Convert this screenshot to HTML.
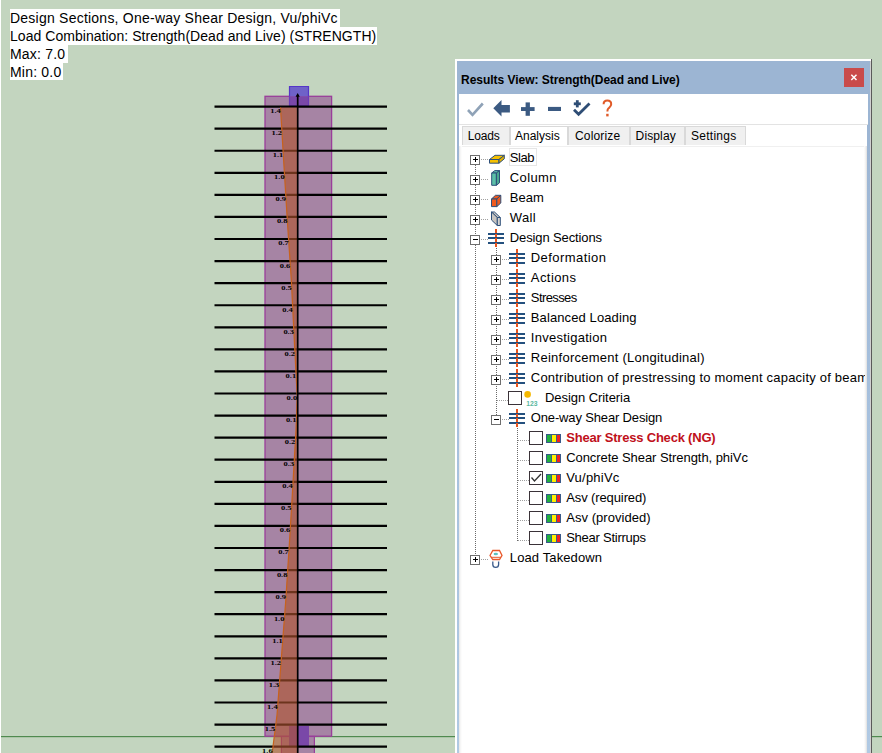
<!DOCTYPE html><html><head><meta charset="utf-8"><style>
html,body{margin:0;padding:0}body{width:882px;height:753px;overflow:hidden;position:relative;background:#c3d5bf;font-family:"Liberation Sans",sans-serif}
.a{position:absolute}.t{position:absolute;white-space:pre;line-height:14px;font-size:13px;color:#000}
.ov{position:absolute;left:10px;height:18px;background:#fff;font-size:14px;line-height:18px;white-space:pre;color:#000}
</style></head><body>
<svg class="a" style="left:0;top:0" width="882" height="753" viewBox="0 0 882 753"><rect x="0" y="0" width="1" height="753" fill="#fff"/><rect x="1" y="736" width="881" height="1.2" fill="#4f8a4f"/><rect x="265" y="96.3" width="66.6" height="639.9" fill="#a684a4" stroke="#9a3e9a" stroke-width="1.3"/><rect x="281.4" y="736.5" width="33" height="30" fill="#a684a4" stroke="#9a3e9a" stroke-width="1.2"/><rect x="289.5" y="86.5" width="19" height="10" fill="#6f62c8"/><rect x="289.5" y="96.5" width="19" height="9.5" fill="#7a48a8"/><path d="M289.5 96.5 L289.5 86.5 L308.5 86.5 L308.5 96.5" fill="none" stroke="#5536c8" stroke-width="1.2"/><path d="M289.5 96.5 L289.5 105.8 L308.5 105.8 L308.5 96.5" fill="none" stroke="#6a3cb8" stroke-width="1.2"/><rect x="289" y="726" width="20" height="20" fill="#7a48a8"/><line x1="214.5" y1="106.60" x2="387" y2="106.60" stroke="#000" stroke-width="2.2"/><line x1="214.5" y1="128.67" x2="387" y2="128.67" stroke="#000" stroke-width="2.2"/><line x1="214.5" y1="150.74" x2="387" y2="150.74" stroke="#000" stroke-width="2.2"/><line x1="214.5" y1="172.81" x2="387" y2="172.81" stroke="#000" stroke-width="2.2"/><line x1="214.5" y1="194.88" x2="387" y2="194.88" stroke="#000" stroke-width="2.2"/><line x1="214.5" y1="216.95" x2="387" y2="216.95" stroke="#000" stroke-width="2.2"/><line x1="214.5" y1="239.02" x2="387" y2="239.02" stroke="#000" stroke-width="2.2"/><line x1="214.5" y1="261.09" x2="387" y2="261.09" stroke="#000" stroke-width="2.2"/><line x1="214.5" y1="283.16" x2="387" y2="283.16" stroke="#000" stroke-width="2.2"/><line x1="214.5" y1="305.23" x2="387" y2="305.23" stroke="#000" stroke-width="2.2"/><line x1="214.5" y1="327.30" x2="387" y2="327.30" stroke="#000" stroke-width="2.2"/><line x1="214.5" y1="349.37" x2="387" y2="349.37" stroke="#000" stroke-width="2.2"/><line x1="214.5" y1="371.44" x2="387" y2="371.44" stroke="#000" stroke-width="2.2"/><line x1="214.5" y1="393.51" x2="387" y2="393.51" stroke="#000" stroke-width="2.2"/><line x1="214.5" y1="415.58" x2="387" y2="415.58" stroke="#000" stroke-width="2.2"/><line x1="214.5" y1="437.65" x2="387" y2="437.65" stroke="#000" stroke-width="2.2"/><line x1="214.5" y1="459.72" x2="387" y2="459.72" stroke="#000" stroke-width="2.2"/><line x1="214.5" y1="481.79" x2="387" y2="481.79" stroke="#000" stroke-width="2.2"/><line x1="214.5" y1="503.86" x2="387" y2="503.86" stroke="#000" stroke-width="2.2"/><line x1="214.5" y1="525.93" x2="387" y2="525.93" stroke="#000" stroke-width="2.2"/><line x1="214.5" y1="548.00" x2="387" y2="548.00" stroke="#000" stroke-width="2.2"/><line x1="214.5" y1="570.07" x2="387" y2="570.07" stroke="#000" stroke-width="2.2"/><line x1="214.5" y1="592.14" x2="387" y2="592.14" stroke="#000" stroke-width="2.2"/><line x1="214.5" y1="614.21" x2="387" y2="614.21" stroke="#000" stroke-width="2.2"/><line x1="214.5" y1="636.28" x2="387" y2="636.28" stroke="#000" stroke-width="2.2"/><line x1="214.5" y1="658.35" x2="387" y2="658.35" stroke="#000" stroke-width="2.2"/><line x1="214.5" y1="680.42" x2="387" y2="680.42" stroke="#000" stroke-width="2.2"/><line x1="214.5" y1="702.49" x2="387" y2="702.49" stroke="#000" stroke-width="2.2"/><line x1="214.5" y1="724.56" x2="387" y2="724.56" stroke="#000" stroke-width="2.2"/><line x1="214.5" y1="746.63" x2="387" y2="746.63" stroke="#000" stroke-width="2.2"/><polygon points="297.7,107.5 280.5,107.5 283.6,160 287.3,220 291.3,280 294.3,340 297.2,396 296,430 292,500 289.6,540 285.8,600 281.2,660 277,715 273.2,745 272.3,753 297.7,753" fill="#b0542e" fill-opacity="0.62"/><polyline points="280.5,107.5 283.6,160 287.3,220 291.3,280 294.3,340 297.2,396 296,430 292,500 289.6,540 285.8,600 281.2,660 277,715 273.2,745 272.3,753" fill="none" stroke="#c8621c" stroke-width="1.2"/><text x="270.2" y="113.0" textLength="10.5" lengthAdjust="spacingAndGlyphs" font-family="Liberation Serif" font-weight="bold" font-size="7" fill="#000">1.4</text><text x="271.5" y="135.1" textLength="10.5" lengthAdjust="spacingAndGlyphs" font-family="Liberation Serif" font-weight="bold" font-size="7" fill="#000">1.2</text><text x="272.8" y="157.1" textLength="10.5" lengthAdjust="spacingAndGlyphs" font-family="Liberation Serif" font-weight="bold" font-size="7" fill="#000">1.1</text><text x="274.1" y="179.2" textLength="10.5" lengthAdjust="spacingAndGlyphs" font-family="Liberation Serif" font-weight="bold" font-size="7" fill="#000">1.0</text><text x="275.5" y="201.3" textLength="10.5" lengthAdjust="spacingAndGlyphs" font-family="Liberation Serif" font-weight="bold" font-size="7" fill="#000">0.9</text><text x="276.9" y="223.3" textLength="10.5" lengthAdjust="spacingAndGlyphs" font-family="Liberation Serif" font-weight="bold" font-size="7" fill="#000">0.8</text><text x="278.3" y="245.4" textLength="10.5" lengthAdjust="spacingAndGlyphs" font-family="Liberation Serif" font-weight="bold" font-size="7" fill="#000">0.7</text><text x="279.8" y="267.5" textLength="10.5" lengthAdjust="spacingAndGlyphs" font-family="Liberation Serif" font-weight="bold" font-size="7" fill="#000">0.6</text><text x="281.2" y="289.6" textLength="10.5" lengthAdjust="spacingAndGlyphs" font-family="Liberation Serif" font-weight="bold" font-size="7" fill="#000">0.5</text><text x="282.3" y="311.6" textLength="10.5" lengthAdjust="spacingAndGlyphs" font-family="Liberation Serif" font-weight="bold" font-size="7" fill="#000">0.4</text><text x="283.4" y="333.7" textLength="10.5" lengthAdjust="spacingAndGlyphs" font-family="Liberation Serif" font-weight="bold" font-size="7" fill="#000">0.3</text><text x="284.5" y="355.8" textLength="10.5" lengthAdjust="spacingAndGlyphs" font-family="Liberation Serif" font-weight="bold" font-size="7" fill="#000">0.2</text><text x="285.6" y="377.8" textLength="10.5" lengthAdjust="spacingAndGlyphs" font-family="Liberation Serif" font-weight="bold" font-size="7" fill="#000">0.1</text><text x="286.6" y="399.9" textLength="10.5" lengthAdjust="spacingAndGlyphs" font-family="Liberation Serif" font-weight="bold" font-size="7" fill="#000">0.0</text><text x="285.9" y="422.0" textLength="10.5" lengthAdjust="spacingAndGlyphs" font-family="Liberation Serif" font-weight="bold" font-size="7" fill="#000">0.1</text><text x="284.8" y="444.0" textLength="10.5" lengthAdjust="spacingAndGlyphs" font-family="Liberation Serif" font-weight="bold" font-size="7" fill="#000">0.2</text><text x="283.6" y="466.1" textLength="10.5" lengthAdjust="spacingAndGlyphs" font-family="Liberation Serif" font-weight="bold" font-size="7" fill="#000">0.3</text><text x="282.3" y="488.2" textLength="10.5" lengthAdjust="spacingAndGlyphs" font-family="Liberation Serif" font-weight="bold" font-size="7" fill="#000">0.4</text><text x="281.0" y="510.3" textLength="10.5" lengthAdjust="spacingAndGlyphs" font-family="Liberation Serif" font-weight="bold" font-size="7" fill="#000">0.5</text><text x="279.7" y="532.3" textLength="10.5" lengthAdjust="spacingAndGlyphs" font-family="Liberation Serif" font-weight="bold" font-size="7" fill="#000">0.6</text><text x="278.3" y="554.4" textLength="10.5" lengthAdjust="spacingAndGlyphs" font-family="Liberation Serif" font-weight="bold" font-size="7" fill="#000">0.7</text><text x="276.9" y="576.5" textLength="10.5" lengthAdjust="spacingAndGlyphs" font-family="Liberation Serif" font-weight="bold" font-size="7" fill="#000">0.8</text><text x="275.5" y="598.5" textLength="10.5" lengthAdjust="spacingAndGlyphs" font-family="Liberation Serif" font-weight="bold" font-size="7" fill="#000">0.9</text><text x="273.9" y="620.6" textLength="10.5" lengthAdjust="spacingAndGlyphs" font-family="Liberation Serif" font-weight="bold" font-size="7" fill="#000">1.0</text><text x="272.2" y="642.7" textLength="10.5" lengthAdjust="spacingAndGlyphs" font-family="Liberation Serif" font-weight="bold" font-size="7" fill="#000">1.1</text><text x="270.5" y="664.8" textLength="10.5" lengthAdjust="spacingAndGlyphs" font-family="Liberation Serif" font-weight="bold" font-size="7" fill="#000">1.2</text><text x="268.8" y="686.8" textLength="10.5" lengthAdjust="spacingAndGlyphs" font-family="Liberation Serif" font-weight="bold" font-size="7" fill="#000">1.3</text><text x="267.1" y="708.9" textLength="10.5" lengthAdjust="spacingAndGlyphs" font-family="Liberation Serif" font-weight="bold" font-size="7" fill="#000">1.4</text><text x="264.8" y="731.0" textLength="10.5" lengthAdjust="spacingAndGlyphs" font-family="Liberation Serif" font-weight="bold" font-size="7" fill="#000">1.5</text><text x="262.1" y="753.0" textLength="10.5" lengthAdjust="spacingAndGlyphs" font-family="Liberation Serif" font-weight="bold" font-size="7" fill="#000">1.6</text><line x1="297.7" y1="95" x2="297.7" y2="753" stroke="#000" stroke-width="1.7"/><polygon points="297.7,93 295.6,96.8 299.8,96.8" fill="#000"/></svg>
<div class="ov" style="top:9px;height:18px;width:330px;letter-spacing:0.23px">Design Sections, One-way Shear Design, Vu/phiVc</div>
<div class="ov" style="top:27px;height:18px;width:367px;letter-spacing:0.04px">Load Combination: Strength(Dead and Live) (STRENGTH)</div>
<div class="ov" style="top:45px;height:17.5px;width:57.5px;letter-spacing:0.2px">Max: 7.0</div>
<div class="ov" style="top:62.5px;height:17.5px;width:53px;letter-spacing:0.2px">Min: 0.0</div>
<div class="a" style="left:455px;top:59px;width:416px;height:694px;background:#fff"></div>
<div class="a" style="left:457px;top:61px;width:413px;height:692px;background:linear-gradient(to bottom,#9cb5d3 0px,#9cb5d3 80px,#a6c0dd 350px,#b0c9e3 692px)"></div>
<div class="a" style="left:870px;top:61px;width:1px;height:692px;background:#d0d0d0"></div>
<div class="a" style="left:871px;top:59px;width:1px;height:694px;background:#5a5a5a"></div>
<div class="a" style="left:459px;top:94px;width:408px;height:659px;background:#fff"></div>
<div class="a" style="left:867px;top:94px;width:1px;height:30px;background:#fff"></div>
<div class="t" style="left:461px;top:73px;font-size:12px;font-weight:bold;letter-spacing:-0.03px">Results View: Strength(Dead and Live)</div>
<div class="a" style="left:844px;top:68px;width:20px;height:19px;background:#c94b4b"></div>
<svg class="a" style="left:844px;top:68px" width="20" height="19"><path d="M7.3 6.8 L12.5 12 M12.5 6.8 L7.3 12" stroke="#fff" stroke-width="1.5"/></svg>
<svg class="a" style="left:459px;top:94px" width="170" height="30" viewBox="459 94 170 30"><polyline points="468,110 472.5,114.8 482.8,103.5" fill="none" stroke="#8fa2b7" stroke-width="2.6" stroke-linejoin="miter"/><polygon points="493.3,108.3 501.5,100.1 501.5,105.1 509.9,105.1 509.9,112.5 501.5,112.5 501.5,116.4" fill="#3b5a82"/><rect x="521" y="107.1" width="13.6" height="3.9" fill="#3b5a82"/><rect x="525.6" y="102.4" width="4.3" height="13.4" fill="#3b5a82"/><rect x="548" y="106.9" width="13" height="4.1" fill="#3b5a82"/><rect x="573.8" y="102.4" width="7" height="2.8" fill="#2e4d75"/><rect x="575.9" y="100.2" width="2.8" height="7.2" fill="#2e4d75"/><polyline points="574,109.8 578.6,114.3 589.5,103.5" fill="none" stroke="#2e4d75" stroke-width="2.8"/></svg>
<svg class="a" style="left:600px;top:98px" width="16" height="22" viewBox="600 98 16 22"><path d="M603.6 104.2 C603.6 101.6 605.4 100.6 607.3 100.6 C609.5 100.6 611.2 102 611.2 104.2 C611.2 106.4 609.6 107.2 608.4 108.4 C607.6 109.2 607.4 110 607.4 111.6" fill="none" stroke="#e05a28" stroke-width="2"/><rect x="606.2" y="113.8" width="2.4" height="2.6" fill="#e05a28"/></svg>
<div class="a" style="left:459px;top:124px;width:409px;height:1px;background:#e3e3e3"></div>
<div class="a" style="left:461.8px;top:126px;width:47.8px;height:18.5px;background:#f0f0f0;box-sizing:border-box;border:1px solid #d9d9d9;border-bottom:none"></div>
<div class="t" style="left:467.7px;top:128.5px;font-size:12px;letter-spacing:-0.18px">Loads</div>
<div class="a" style="left:509.6px;top:126px;width:58.4px;height:18.5px;background:#fff;box-sizing:border-box;border:1px solid #d9d9d9;border-bottom:none"></div>
<div class="t" style="left:515.0px;top:128.5px;font-size:12px;letter-spacing:0.0px">Analysis</div>
<div class="a" style="left:568.0px;top:126px;width:61.6px;height:18.5px;background:#f0f0f0;box-sizing:border-box;border:1px solid #d9d9d9;border-bottom:none"></div>
<div class="t" style="left:575.0px;top:128.5px;font-size:12px;letter-spacing:0.17px">Colorize</div>
<div class="a" style="left:629.6px;top:126px;width:55.0px;height:18.5px;background:#f0f0f0;box-sizing:border-box;border:1px solid #d9d9d9;border-bottom:none"></div>
<div class="t" style="left:635.6px;top:128.5px;font-size:12px;letter-spacing:0.13px">Display</div>
<div class="a" style="left:684.6px;top:126px;width:61.0px;height:18.5px;background:#f0f0f0;box-sizing:border-box;border:1px solid #d9d9d9;border-bottom:none"></div>
<div class="t" style="left:691.0px;top:128.5px;font-size:12px;letter-spacing:0.27px">Settings</div>
<div class="a" style="left:459px;top:146px;width:408px;height:607px;box-sizing:border-box;border-top:1px solid #f0f0f0"></div>
<div class="a" style="left:459px;top:146px;width:3px;height:607px;background:linear-gradient(to right,#e6e6e6,#f6f6f6,#fff)"></div>
<div class="a" style="left:864px;top:146px;width:3px;height:607px;background:linear-gradient(to right,#fff,#f2f2f2,#dedede)"></div>
<svg class="a" style="left:459px;top:146px" width="409" height="430" viewBox="459 146 409 430" shape-rendering="crispEdges"><rect x="475" y="165" width="1" height="1" fill="#6a6a6a"/><rect x="475" y="167" width="1" height="1" fill="#6a6a6a"/><rect x="475" y="169" width="1" height="1" fill="#6a6a6a"/><rect x="475" y="171" width="1" height="1" fill="#6a6a6a"/><rect x="475" y="173" width="1" height="1" fill="#6a6a6a"/><rect x="475" y="175" width="1" height="1" fill="#6a6a6a"/><rect x="475" y="177" width="1" height="1" fill="#6a6a6a"/><rect x="475" y="179" width="1" height="1" fill="#6a6a6a"/><rect x="475" y="181" width="1" height="1" fill="#6a6a6a"/><rect x="475" y="183" width="1" height="1" fill="#6a6a6a"/><rect x="475" y="185" width="1" height="1" fill="#6a6a6a"/><rect x="475" y="187" width="1" height="1" fill="#6a6a6a"/><rect x="475" y="189" width="1" height="1" fill="#6a6a6a"/><rect x="475" y="191" width="1" height="1" fill="#6a6a6a"/><rect x="475" y="193" width="1" height="1" fill="#6a6a6a"/><rect x="475" y="195" width="1" height="1" fill="#6a6a6a"/><rect x="475" y="197" width="1" height="1" fill="#6a6a6a"/><rect x="475" y="199" width="1" height="1" fill="#6a6a6a"/><rect x="475" y="201" width="1" height="1" fill="#6a6a6a"/><rect x="475" y="203" width="1" height="1" fill="#6a6a6a"/><rect x="475" y="205" width="1" height="1" fill="#6a6a6a"/><rect x="475" y="207" width="1" height="1" fill="#6a6a6a"/><rect x="475" y="209" width="1" height="1" fill="#6a6a6a"/><rect x="475" y="211" width="1" height="1" fill="#6a6a6a"/><rect x="475" y="213" width="1" height="1" fill="#6a6a6a"/><rect x="475" y="215" width="1" height="1" fill="#6a6a6a"/><rect x="475" y="217" width="1" height="1" fill="#6a6a6a"/><rect x="475" y="219" width="1" height="1" fill="#6a6a6a"/><rect x="475" y="221" width="1" height="1" fill="#6a6a6a"/><rect x="475" y="223" width="1" height="1" fill="#6a6a6a"/><rect x="475" y="225" width="1" height="1" fill="#6a6a6a"/><rect x="475" y="227" width="1" height="1" fill="#6a6a6a"/><rect x="475" y="229" width="1" height="1" fill="#6a6a6a"/><rect x="475" y="231" width="1" height="1" fill="#6a6a6a"/><rect x="475" y="233" width="1" height="1" fill="#6a6a6a"/><rect x="475" y="235" width="1" height="1" fill="#6a6a6a"/><rect x="475" y="237" width="1" height="1" fill="#6a6a6a"/><rect x="475" y="239" width="1" height="1" fill="#6a6a6a"/><rect x="475" y="241" width="1" height="1" fill="#6a6a6a"/><rect x="475" y="243" width="1" height="1" fill="#6a6a6a"/><rect x="475" y="245" width="1" height="1" fill="#6a6a6a"/><rect x="475" y="247" width="1" height="1" fill="#6a6a6a"/><rect x="475" y="249" width="1" height="1" fill="#6a6a6a"/><rect x="475" y="251" width="1" height="1" fill="#6a6a6a"/><rect x="475" y="253" width="1" height="1" fill="#6a6a6a"/><rect x="475" y="255" width="1" height="1" fill="#6a6a6a"/><rect x="475" y="257" width="1" height="1" fill="#6a6a6a"/><rect x="475" y="259" width="1" height="1" fill="#6a6a6a"/><rect x="475" y="261" width="1" height="1" fill="#6a6a6a"/><rect x="475" y="263" width="1" height="1" fill="#6a6a6a"/><rect x="475" y="265" width="1" height="1" fill="#6a6a6a"/><rect x="475" y="267" width="1" height="1" fill="#6a6a6a"/><rect x="475" y="269" width="1" height="1" fill="#6a6a6a"/><rect x="475" y="271" width="1" height="1" fill="#6a6a6a"/><rect x="475" y="273" width="1" height="1" fill="#6a6a6a"/><rect x="475" y="275" width="1" height="1" fill="#6a6a6a"/><rect x="475" y="277" width="1" height="1" fill="#6a6a6a"/><rect x="475" y="279" width="1" height="1" fill="#6a6a6a"/><rect x="475" y="281" width="1" height="1" fill="#6a6a6a"/><rect x="475" y="283" width="1" height="1" fill="#6a6a6a"/><rect x="475" y="285" width="1" height="1" fill="#6a6a6a"/><rect x="475" y="287" width="1" height="1" fill="#6a6a6a"/><rect x="475" y="289" width="1" height="1" fill="#6a6a6a"/><rect x="475" y="291" width="1" height="1" fill="#6a6a6a"/><rect x="475" y="293" width="1" height="1" fill="#6a6a6a"/><rect x="475" y="295" width="1" height="1" fill="#6a6a6a"/><rect x="475" y="297" width="1" height="1" fill="#6a6a6a"/><rect x="475" y="299" width="1" height="1" fill="#6a6a6a"/><rect x="475" y="301" width="1" height="1" fill="#6a6a6a"/><rect x="475" y="303" width="1" height="1" fill="#6a6a6a"/><rect x="475" y="305" width="1" height="1" fill="#6a6a6a"/><rect x="475" y="307" width="1" height="1" fill="#6a6a6a"/><rect x="475" y="309" width="1" height="1" fill="#6a6a6a"/><rect x="475" y="311" width="1" height="1" fill="#6a6a6a"/><rect x="475" y="313" width="1" height="1" fill="#6a6a6a"/><rect x="475" y="315" width="1" height="1" fill="#6a6a6a"/><rect x="475" y="317" width="1" height="1" fill="#6a6a6a"/><rect x="475" y="319" width="1" height="1" fill="#6a6a6a"/><rect x="475" y="321" width="1" height="1" fill="#6a6a6a"/><rect x="475" y="323" width="1" height="1" fill="#6a6a6a"/><rect x="475" y="325" width="1" height="1" fill="#6a6a6a"/><rect x="475" y="327" width="1" height="1" fill="#6a6a6a"/><rect x="475" y="329" width="1" height="1" fill="#6a6a6a"/><rect x="475" y="331" width="1" height="1" fill="#6a6a6a"/><rect x="475" y="333" width="1" height="1" fill="#6a6a6a"/><rect x="475" y="335" width="1" height="1" fill="#6a6a6a"/><rect x="475" y="337" width="1" height="1" fill="#6a6a6a"/><rect x="475" y="339" width="1" height="1" fill="#6a6a6a"/><rect x="475" y="341" width="1" height="1" fill="#6a6a6a"/><rect x="475" y="343" width="1" height="1" fill="#6a6a6a"/><rect x="475" y="345" width="1" height="1" fill="#6a6a6a"/><rect x="475" y="347" width="1" height="1" fill="#6a6a6a"/><rect x="475" y="349" width="1" height="1" fill="#6a6a6a"/><rect x="475" y="351" width="1" height="1" fill="#6a6a6a"/><rect x="475" y="353" width="1" height="1" fill="#6a6a6a"/><rect x="475" y="355" width="1" height="1" fill="#6a6a6a"/><rect x="475" y="357" width="1" height="1" fill="#6a6a6a"/><rect x="475" y="359" width="1" height="1" fill="#6a6a6a"/><rect x="475" y="361" width="1" height="1" fill="#6a6a6a"/><rect x="475" y="363" width="1" height="1" fill="#6a6a6a"/><rect x="475" y="365" width="1" height="1" fill="#6a6a6a"/><rect x="475" y="367" width="1" height="1" fill="#6a6a6a"/><rect x="475" y="369" width="1" height="1" fill="#6a6a6a"/><rect x="475" y="371" width="1" height="1" fill="#6a6a6a"/><rect x="475" y="373" width="1" height="1" fill="#6a6a6a"/><rect x="475" y="375" width="1" height="1" fill="#6a6a6a"/><rect x="475" y="377" width="1" height="1" fill="#6a6a6a"/><rect x="475" y="379" width="1" height="1" fill="#6a6a6a"/><rect x="475" y="381" width="1" height="1" fill="#6a6a6a"/><rect x="475" y="383" width="1" height="1" fill="#6a6a6a"/><rect x="475" y="385" width="1" height="1" fill="#6a6a6a"/><rect x="475" y="387" width="1" height="1" fill="#6a6a6a"/><rect x="475" y="389" width="1" height="1" fill="#6a6a6a"/><rect x="475" y="391" width="1" height="1" fill="#6a6a6a"/><rect x="475" y="393" width="1" height="1" fill="#6a6a6a"/><rect x="475" y="395" width="1" height="1" fill="#6a6a6a"/><rect x="475" y="397" width="1" height="1" fill="#6a6a6a"/><rect x="475" y="399" width="1" height="1" fill="#6a6a6a"/><rect x="475" y="401" width="1" height="1" fill="#6a6a6a"/><rect x="475" y="403" width="1" height="1" fill="#6a6a6a"/><rect x="475" y="405" width="1" height="1" fill="#6a6a6a"/><rect x="475" y="407" width="1" height="1" fill="#6a6a6a"/><rect x="475" y="409" width="1" height="1" fill="#6a6a6a"/><rect x="475" y="411" width="1" height="1" fill="#6a6a6a"/><rect x="475" y="413" width="1" height="1" fill="#6a6a6a"/><rect x="475" y="415" width="1" height="1" fill="#6a6a6a"/><rect x="475" y="417" width="1" height="1" fill="#6a6a6a"/><rect x="475" y="419" width="1" height="1" fill="#6a6a6a"/><rect x="475" y="421" width="1" height="1" fill="#6a6a6a"/><rect x="475" y="423" width="1" height="1" fill="#6a6a6a"/><rect x="475" y="425" width="1" height="1" fill="#6a6a6a"/><rect x="475" y="427" width="1" height="1" fill="#6a6a6a"/><rect x="475" y="429" width="1" height="1" fill="#6a6a6a"/><rect x="475" y="431" width="1" height="1" fill="#6a6a6a"/><rect x="475" y="433" width="1" height="1" fill="#6a6a6a"/><rect x="475" y="435" width="1" height="1" fill="#6a6a6a"/><rect x="475" y="437" width="1" height="1" fill="#6a6a6a"/><rect x="475" y="439" width="1" height="1" fill="#6a6a6a"/><rect x="475" y="441" width="1" height="1" fill="#6a6a6a"/><rect x="475" y="443" width="1" height="1" fill="#6a6a6a"/><rect x="475" y="445" width="1" height="1" fill="#6a6a6a"/><rect x="475" y="447" width="1" height="1" fill="#6a6a6a"/><rect x="475" y="449" width="1" height="1" fill="#6a6a6a"/><rect x="475" y="451" width="1" height="1" fill="#6a6a6a"/><rect x="475" y="453" width="1" height="1" fill="#6a6a6a"/><rect x="475" y="455" width="1" height="1" fill="#6a6a6a"/><rect x="475" y="457" width="1" height="1" fill="#6a6a6a"/><rect x="475" y="459" width="1" height="1" fill="#6a6a6a"/><rect x="475" y="461" width="1" height="1" fill="#6a6a6a"/><rect x="475" y="463" width="1" height="1" fill="#6a6a6a"/><rect x="475" y="465" width="1" height="1" fill="#6a6a6a"/><rect x="475" y="467" width="1" height="1" fill="#6a6a6a"/><rect x="475" y="469" width="1" height="1" fill="#6a6a6a"/><rect x="475" y="471" width="1" height="1" fill="#6a6a6a"/><rect x="475" y="473" width="1" height="1" fill="#6a6a6a"/><rect x="475" y="475" width="1" height="1" fill="#6a6a6a"/><rect x="475" y="477" width="1" height="1" fill="#6a6a6a"/><rect x="475" y="479" width="1" height="1" fill="#6a6a6a"/><rect x="475" y="481" width="1" height="1" fill="#6a6a6a"/><rect x="475" y="483" width="1" height="1" fill="#6a6a6a"/><rect x="475" y="485" width="1" height="1" fill="#6a6a6a"/><rect x="475" y="487" width="1" height="1" fill="#6a6a6a"/><rect x="475" y="489" width="1" height="1" fill="#6a6a6a"/><rect x="475" y="491" width="1" height="1" fill="#6a6a6a"/><rect x="475" y="493" width="1" height="1" fill="#6a6a6a"/><rect x="475" y="495" width="1" height="1" fill="#6a6a6a"/><rect x="475" y="497" width="1" height="1" fill="#6a6a6a"/><rect x="475" y="499" width="1" height="1" fill="#6a6a6a"/><rect x="475" y="501" width="1" height="1" fill="#6a6a6a"/><rect x="475" y="503" width="1" height="1" fill="#6a6a6a"/><rect x="475" y="505" width="1" height="1" fill="#6a6a6a"/><rect x="475" y="507" width="1" height="1" fill="#6a6a6a"/><rect x="475" y="509" width="1" height="1" fill="#6a6a6a"/><rect x="475" y="511" width="1" height="1" fill="#6a6a6a"/><rect x="475" y="513" width="1" height="1" fill="#6a6a6a"/><rect x="475" y="515" width="1" height="1" fill="#6a6a6a"/><rect x="475" y="517" width="1" height="1" fill="#6a6a6a"/><rect x="475" y="519" width="1" height="1" fill="#6a6a6a"/><rect x="475" y="521" width="1" height="1" fill="#6a6a6a"/><rect x="475" y="523" width="1" height="1" fill="#6a6a6a"/><rect x="475" y="525" width="1" height="1" fill="#6a6a6a"/><rect x="475" y="527" width="1" height="1" fill="#6a6a6a"/><rect x="475" y="529" width="1" height="1" fill="#6a6a6a"/><rect x="475" y="531" width="1" height="1" fill="#6a6a6a"/><rect x="475" y="533" width="1" height="1" fill="#6a6a6a"/><rect x="475" y="535" width="1" height="1" fill="#6a6a6a"/><rect x="475" y="537" width="1" height="1" fill="#6a6a6a"/><rect x="475" y="539" width="1" height="1" fill="#6a6a6a"/><rect x="475" y="541" width="1" height="1" fill="#6a6a6a"/><rect x="475" y="543" width="1" height="1" fill="#6a6a6a"/><rect x="475" y="545" width="1" height="1" fill="#6a6a6a"/><rect x="475" y="547" width="1" height="1" fill="#6a6a6a"/><rect x="475" y="549" width="1" height="1" fill="#6a6a6a"/><rect x="475" y="551" width="1" height="1" fill="#6a6a6a"/><rect x="475" y="553" width="1" height="1" fill="#6a6a6a"/><rect x="496" y="248" width="1" height="1" fill="#6a6a6a"/><rect x="496" y="250" width="1" height="1" fill="#6a6a6a"/><rect x="496" y="252" width="1" height="1" fill="#6a6a6a"/><rect x="496" y="254" width="1" height="1" fill="#6a6a6a"/><rect x="496" y="256" width="1" height="1" fill="#6a6a6a"/><rect x="496" y="258" width="1" height="1" fill="#6a6a6a"/><rect x="496" y="260" width="1" height="1" fill="#6a6a6a"/><rect x="496" y="262" width="1" height="1" fill="#6a6a6a"/><rect x="496" y="264" width="1" height="1" fill="#6a6a6a"/><rect x="496" y="266" width="1" height="1" fill="#6a6a6a"/><rect x="496" y="268" width="1" height="1" fill="#6a6a6a"/><rect x="496" y="270" width="1" height="1" fill="#6a6a6a"/><rect x="496" y="272" width="1" height="1" fill="#6a6a6a"/><rect x="496" y="274" width="1" height="1" fill="#6a6a6a"/><rect x="496" y="276" width="1" height="1" fill="#6a6a6a"/><rect x="496" y="278" width="1" height="1" fill="#6a6a6a"/><rect x="496" y="280" width="1" height="1" fill="#6a6a6a"/><rect x="496" y="282" width="1" height="1" fill="#6a6a6a"/><rect x="496" y="284" width="1" height="1" fill="#6a6a6a"/><rect x="496" y="286" width="1" height="1" fill="#6a6a6a"/><rect x="496" y="288" width="1" height="1" fill="#6a6a6a"/><rect x="496" y="290" width="1" height="1" fill="#6a6a6a"/><rect x="496" y="292" width="1" height="1" fill="#6a6a6a"/><rect x="496" y="294" width="1" height="1" fill="#6a6a6a"/><rect x="496" y="296" width="1" height="1" fill="#6a6a6a"/><rect x="496" y="298" width="1" height="1" fill="#6a6a6a"/><rect x="496" y="300" width="1" height="1" fill="#6a6a6a"/><rect x="496" y="302" width="1" height="1" fill="#6a6a6a"/><rect x="496" y="304" width="1" height="1" fill="#6a6a6a"/><rect x="496" y="306" width="1" height="1" fill="#6a6a6a"/><rect x="496" y="308" width="1" height="1" fill="#6a6a6a"/><rect x="496" y="310" width="1" height="1" fill="#6a6a6a"/><rect x="496" y="312" width="1" height="1" fill="#6a6a6a"/><rect x="496" y="314" width="1" height="1" fill="#6a6a6a"/><rect x="496" y="316" width="1" height="1" fill="#6a6a6a"/><rect x="496" y="318" width="1" height="1" fill="#6a6a6a"/><rect x="496" y="320" width="1" height="1" fill="#6a6a6a"/><rect x="496" y="322" width="1" height="1" fill="#6a6a6a"/><rect x="496" y="324" width="1" height="1" fill="#6a6a6a"/><rect x="496" y="326" width="1" height="1" fill="#6a6a6a"/><rect x="496" y="328" width="1" height="1" fill="#6a6a6a"/><rect x="496" y="330" width="1" height="1" fill="#6a6a6a"/><rect x="496" y="332" width="1" height="1" fill="#6a6a6a"/><rect x="496" y="334" width="1" height="1" fill="#6a6a6a"/><rect x="496" y="336" width="1" height="1" fill="#6a6a6a"/><rect x="496" y="338" width="1" height="1" fill="#6a6a6a"/><rect x="496" y="340" width="1" height="1" fill="#6a6a6a"/><rect x="496" y="342" width="1" height="1" fill="#6a6a6a"/><rect x="496" y="344" width="1" height="1" fill="#6a6a6a"/><rect x="496" y="346" width="1" height="1" fill="#6a6a6a"/><rect x="496" y="348" width="1" height="1" fill="#6a6a6a"/><rect x="496" y="350" width="1" height="1" fill="#6a6a6a"/><rect x="496" y="352" width="1" height="1" fill="#6a6a6a"/><rect x="496" y="354" width="1" height="1" fill="#6a6a6a"/><rect x="496" y="356" width="1" height="1" fill="#6a6a6a"/><rect x="496" y="358" width="1" height="1" fill="#6a6a6a"/><rect x="496" y="360" width="1" height="1" fill="#6a6a6a"/><rect x="496" y="362" width="1" height="1" fill="#6a6a6a"/><rect x="496" y="364" width="1" height="1" fill="#6a6a6a"/><rect x="496" y="366" width="1" height="1" fill="#6a6a6a"/><rect x="496" y="368" width="1" height="1" fill="#6a6a6a"/><rect x="496" y="370" width="1" height="1" fill="#6a6a6a"/><rect x="496" y="372" width="1" height="1" fill="#6a6a6a"/><rect x="496" y="374" width="1" height="1" fill="#6a6a6a"/><rect x="496" y="376" width="1" height="1" fill="#6a6a6a"/><rect x="496" y="378" width="1" height="1" fill="#6a6a6a"/><rect x="496" y="380" width="1" height="1" fill="#6a6a6a"/><rect x="496" y="382" width="1" height="1" fill="#6a6a6a"/><rect x="496" y="384" width="1" height="1" fill="#6a6a6a"/><rect x="496" y="386" width="1" height="1" fill="#6a6a6a"/><rect x="496" y="388" width="1" height="1" fill="#6a6a6a"/><rect x="496" y="390" width="1" height="1" fill="#6a6a6a"/><rect x="496" y="392" width="1" height="1" fill="#6a6a6a"/><rect x="496" y="394" width="1" height="1" fill="#6a6a6a"/><rect x="496" y="396" width="1" height="1" fill="#6a6a6a"/><rect x="496" y="398" width="1" height="1" fill="#6a6a6a"/><rect x="496" y="400" width="1" height="1" fill="#6a6a6a"/><rect x="496" y="402" width="1" height="1" fill="#6a6a6a"/><rect x="496" y="404" width="1" height="1" fill="#6a6a6a"/><rect x="496" y="406" width="1" height="1" fill="#6a6a6a"/><rect x="496" y="408" width="1" height="1" fill="#6a6a6a"/><rect x="496" y="410" width="1" height="1" fill="#6a6a6a"/><rect x="496" y="412" width="1" height="1" fill="#6a6a6a"/><rect x="496" y="414" width="1" height="1" fill="#6a6a6a"/><rect x="517" y="428" width="1" height="1" fill="#6a6a6a"/><rect x="517" y="430" width="1" height="1" fill="#6a6a6a"/><rect x="517" y="432" width="1" height="1" fill="#6a6a6a"/><rect x="517" y="434" width="1" height="1" fill="#6a6a6a"/><rect x="517" y="436" width="1" height="1" fill="#6a6a6a"/><rect x="517" y="438" width="1" height="1" fill="#6a6a6a"/><rect x="517" y="440" width="1" height="1" fill="#6a6a6a"/><rect x="517" y="442" width="1" height="1" fill="#6a6a6a"/><rect x="517" y="444" width="1" height="1" fill="#6a6a6a"/><rect x="517" y="446" width="1" height="1" fill="#6a6a6a"/><rect x="517" y="448" width="1" height="1" fill="#6a6a6a"/><rect x="517" y="450" width="1" height="1" fill="#6a6a6a"/><rect x="517" y="452" width="1" height="1" fill="#6a6a6a"/><rect x="517" y="454" width="1" height="1" fill="#6a6a6a"/><rect x="517" y="456" width="1" height="1" fill="#6a6a6a"/><rect x="517" y="458" width="1" height="1" fill="#6a6a6a"/><rect x="517" y="460" width="1" height="1" fill="#6a6a6a"/><rect x="517" y="462" width="1" height="1" fill="#6a6a6a"/><rect x="517" y="464" width="1" height="1" fill="#6a6a6a"/><rect x="517" y="466" width="1" height="1" fill="#6a6a6a"/><rect x="517" y="468" width="1" height="1" fill="#6a6a6a"/><rect x="517" y="470" width="1" height="1" fill="#6a6a6a"/><rect x="517" y="472" width="1" height="1" fill="#6a6a6a"/><rect x="517" y="474" width="1" height="1" fill="#6a6a6a"/><rect x="517" y="476" width="1" height="1" fill="#6a6a6a"/><rect x="517" y="478" width="1" height="1" fill="#6a6a6a"/><rect x="517" y="480" width="1" height="1" fill="#6a6a6a"/><rect x="517" y="482" width="1" height="1" fill="#6a6a6a"/><rect x="517" y="484" width="1" height="1" fill="#6a6a6a"/><rect x="517" y="486" width="1" height="1" fill="#6a6a6a"/><rect x="517" y="488" width="1" height="1" fill="#6a6a6a"/><rect x="517" y="490" width="1" height="1" fill="#6a6a6a"/><rect x="517" y="492" width="1" height="1" fill="#6a6a6a"/><rect x="517" y="494" width="1" height="1" fill="#6a6a6a"/><rect x="517" y="496" width="1" height="1" fill="#6a6a6a"/><rect x="517" y="498" width="1" height="1" fill="#6a6a6a"/><rect x="517" y="500" width="1" height="1" fill="#6a6a6a"/><rect x="517" y="502" width="1" height="1" fill="#6a6a6a"/><rect x="517" y="504" width="1" height="1" fill="#6a6a6a"/><rect x="517" y="506" width="1" height="1" fill="#6a6a6a"/><rect x="517" y="508" width="1" height="1" fill="#6a6a6a"/><rect x="517" y="510" width="1" height="1" fill="#6a6a6a"/><rect x="517" y="512" width="1" height="1" fill="#6a6a6a"/><rect x="517" y="514" width="1" height="1" fill="#6a6a6a"/><rect x="517" y="516" width="1" height="1" fill="#6a6a6a"/><rect x="517" y="518" width="1" height="1" fill="#6a6a6a"/><rect x="517" y="520" width="1" height="1" fill="#6a6a6a"/><rect x="517" y="522" width="1" height="1" fill="#6a6a6a"/><rect x="517" y="524" width="1" height="1" fill="#6a6a6a"/><rect x="517" y="526" width="1" height="1" fill="#6a6a6a"/><rect x="517" y="528" width="1" height="1" fill="#6a6a6a"/><rect x="517" y="530" width="1" height="1" fill="#6a6a6a"/><rect x="517" y="532" width="1" height="1" fill="#6a6a6a"/><rect x="517" y="534" width="1" height="1" fill="#6a6a6a"/><rect x="517" y="536" width="1" height="1" fill="#6a6a6a"/><rect x="517" y="538" width="1" height="1" fill="#6a6a6a"/><rect x="517" y="540" width="1" height="1" fill="#6a6a6a"/><rect x="470.5" y="155.5" width="9" height="9" fill="#fff" stroke="#6e6e6e" stroke-width="1"/><rect x="473" y="159" width="5" height="1" fill="#000"/><rect x="475" y="157" width="1" height="5" fill="#000"/><rect x="481" y="159" width="1" height="1" fill="#a0a0a0"/><rect x="483" y="159" width="1" height="1" fill="#a0a0a0"/><rect x="485" y="159" width="1" height="1" fill="#a0a0a0"/><rect x="487" y="159" width="1" height="1" fill="#a0a0a0"/><g shape-rendering="auto"><path d="M489.5 159.5 L495 155.3 L504.3 155.3 L499 159.5 Z" fill="#f5c000" stroke="#2d4f7a" stroke-width="1"/><path d="M489.5 159.5 L499 159.5 L499 163.2 L489.5 163.2 Z" fill="#f5c000" stroke="#2d4f7a" stroke-width="1"/><path d="M499 159.5 L504.3 155.3 L504.3 158.8 L499 163.2 Z" fill="#e0b000" stroke="#2d4f7a" stroke-width="1"/></g><rect x="470.5" y="175.5" width="9" height="9" fill="#fff" stroke="#6e6e6e" stroke-width="1"/><rect x="473" y="179" width="5" height="1" fill="#000"/><rect x="475" y="177" width="1" height="5" fill="#000"/><rect x="481" y="179" width="1" height="1" fill="#a0a0a0"/><rect x="483" y="179" width="1" height="1" fill="#a0a0a0"/><rect x="485" y="179" width="1" height="1" fill="#a0a0a0"/><rect x="487" y="179" width="1" height="1" fill="#a0a0a0"/><g shape-rendering="auto"><path d="M491.7 173 L494.8 170.6 L499.5 170.6 L496.4 173 Z" fill="#5cc0a8" stroke="#2d4f7a" stroke-width="1"/><path d="M491.7 173 L496.4 173 L496.4 185.3 L491.7 185.3 Z" fill="#5cc0a8" stroke="#2d4f7a" stroke-width="1"/><path d="M496.4 173 L499.5 170.6 L499.5 182.8 L496.4 185.3 Z" fill="#4aa890" stroke="#2d4f7a" stroke-width="1"/></g><rect x="470.5" y="195.5" width="9" height="9" fill="#fff" stroke="#6e6e6e" stroke-width="1"/><rect x="473" y="199" width="5" height="1" fill="#000"/><rect x="475" y="197" width="1" height="5" fill="#000"/><rect x="481" y="199" width="1" height="1" fill="#a0a0a0"/><rect x="483" y="199" width="1" height="1" fill="#a0a0a0"/><rect x="485" y="199" width="1" height="1" fill="#a0a0a0"/><rect x="487" y="199" width="1" height="1" fill="#a0a0a0"/><g shape-rendering="auto"><path d="M491.5 199 L495.5 195.3 L500.8 195.3 L496.8 199 Z" fill="#f05a1e" stroke="#2d4f7a" stroke-width="1"/><path d="M491.5 199 L496.8 199 L496.8 206.6 L491.5 206.6 Z" fill="#f05a1e" stroke="#2d4f7a" stroke-width="1"/><path d="M496.8 199 L500.8 195.3 L500.8 203 L496.8 206.6 Z" fill="#f05a1e" stroke="#2d4f7a" stroke-width="1"/></g><rect x="470.5" y="215.5" width="9" height="9" fill="#fff" stroke="#6e6e6e" stroke-width="1"/><rect x="473" y="219" width="5" height="1" fill="#000"/><rect x="475" y="217" width="1" height="5" fill="#000"/><rect x="481" y="219" width="1" height="1" fill="#a0a0a0"/><rect x="483" y="219" width="1" height="1" fill="#a0a0a0"/><rect x="485" y="219" width="1" height="1" fill="#a0a0a0"/><rect x="487" y="219" width="1" height="1" fill="#a0a0a0"/><g shape-rendering="auto"><path d="M491.5 212 L494.5 212 L500.3 217.5 L497.3 217.5 Z" fill="#c8c4c0" stroke="#2d4f7a" stroke-width="1"/><path d="M491.5 212 L497.3 217.5 L497.3 225.5 L491.5 220 Z" fill="#c8c4c0" stroke="#2d4f7a" stroke-width="1"/><path d="M497.3 217.5 L500.3 217.5 L500.3 225.5 L497.3 225.5 Z" fill="#d8d4d0" stroke="#2d4f7a" stroke-width="1"/></g><rect x="470.5" y="235.5" width="9" height="9" fill="#fff" stroke="#6e6e6e" stroke-width="1"/><rect x="473" y="239" width="5" height="1" fill="#000"/><rect x="481" y="239" width="1" height="1" fill="#a0a0a0"/><rect x="483" y="239" width="1" height="1" fill="#a0a0a0"/><rect x="485" y="239" width="1" height="1" fill="#a0a0a0"/><rect x="487" y="239" width="1" height="1" fill="#a0a0a0"/><rect x="488" y="233" width="16" height="2" fill="#24507e"/><rect x="488" y="237" width="16" height="2" fill="#24507e"/><rect x="488" y="242" width="16" height="2" fill="#24507e"/><rect x="495" y="229" width="2" height="4" fill="#e8541c"/><rect x="495" y="234" width="2" height="3" fill="#e8541c"/><rect x="495" y="238" width="2" height="4" fill="#e8541c"/><rect x="495" y="243" width="2" height="4" fill="#e8541c"/><rect x="491.5" y="255.5" width="9" height="9" fill="#fff" stroke="#6e6e6e" stroke-width="1"/><rect x="494" y="259" width="5" height="1" fill="#000"/><rect x="496" y="257" width="1" height="5" fill="#000"/><rect x="502" y="259" width="1" height="1" fill="#a0a0a0"/><rect x="504" y="259" width="1" height="1" fill="#a0a0a0"/><rect x="506" y="259" width="1" height="1" fill="#a0a0a0"/><rect x="508" y="259" width="1" height="1" fill="#a0a0a0"/><rect x="509" y="253" width="16" height="2" fill="#24507e"/><rect x="509" y="257" width="16" height="2" fill="#24507e"/><rect x="509" y="262" width="16" height="2" fill="#24507e"/><rect x="516" y="249" width="2" height="4" fill="#e8541c"/><rect x="516" y="254" width="2" height="3" fill="#e8541c"/><rect x="516" y="258" width="2" height="4" fill="#e8541c"/><rect x="516" y="263" width="2" height="4" fill="#e8541c"/><rect x="491.5" y="275.5" width="9" height="9" fill="#fff" stroke="#6e6e6e" stroke-width="1"/><rect x="494" y="279" width="5" height="1" fill="#000"/><rect x="496" y="277" width="1" height="5" fill="#000"/><rect x="502" y="279" width="1" height="1" fill="#a0a0a0"/><rect x="504" y="279" width="1" height="1" fill="#a0a0a0"/><rect x="506" y="279" width="1" height="1" fill="#a0a0a0"/><rect x="508" y="279" width="1" height="1" fill="#a0a0a0"/><rect x="509" y="273" width="16" height="2" fill="#24507e"/><rect x="509" y="277" width="16" height="2" fill="#24507e"/><rect x="509" y="282" width="16" height="2" fill="#24507e"/><rect x="516" y="269" width="2" height="4" fill="#e8541c"/><rect x="516" y="274" width="2" height="3" fill="#e8541c"/><rect x="516" y="278" width="2" height="4" fill="#e8541c"/><rect x="516" y="283" width="2" height="4" fill="#e8541c"/><rect x="491.5" y="295.5" width="9" height="9" fill="#fff" stroke="#6e6e6e" stroke-width="1"/><rect x="494" y="299" width="5" height="1" fill="#000"/><rect x="496" y="297" width="1" height="5" fill="#000"/><rect x="502" y="299" width="1" height="1" fill="#a0a0a0"/><rect x="504" y="299" width="1" height="1" fill="#a0a0a0"/><rect x="506" y="299" width="1" height="1" fill="#a0a0a0"/><rect x="508" y="299" width="1" height="1" fill="#a0a0a0"/><rect x="509" y="293" width="16" height="2" fill="#24507e"/><rect x="509" y="297" width="16" height="2" fill="#24507e"/><rect x="509" y="302" width="16" height="2" fill="#24507e"/><rect x="516" y="289" width="2" height="4" fill="#e8541c"/><rect x="516" y="294" width="2" height="3" fill="#e8541c"/><rect x="516" y="298" width="2" height="4" fill="#e8541c"/><rect x="516" y="303" width="2" height="4" fill="#e8541c"/><rect x="491.5" y="315.5" width="9" height="9" fill="#fff" stroke="#6e6e6e" stroke-width="1"/><rect x="494" y="319" width="5" height="1" fill="#000"/><rect x="496" y="317" width="1" height="5" fill="#000"/><rect x="502" y="319" width="1" height="1" fill="#a0a0a0"/><rect x="504" y="319" width="1" height="1" fill="#a0a0a0"/><rect x="506" y="319" width="1" height="1" fill="#a0a0a0"/><rect x="508" y="319" width="1" height="1" fill="#a0a0a0"/><rect x="509" y="313" width="16" height="2" fill="#24507e"/><rect x="509" y="317" width="16" height="2" fill="#24507e"/><rect x="509" y="322" width="16" height="2" fill="#24507e"/><rect x="516" y="309" width="2" height="4" fill="#e8541c"/><rect x="516" y="314" width="2" height="3" fill="#e8541c"/><rect x="516" y="318" width="2" height="4" fill="#e8541c"/><rect x="516" y="323" width="2" height="4" fill="#e8541c"/><rect x="491.5" y="335.5" width="9" height="9" fill="#fff" stroke="#6e6e6e" stroke-width="1"/><rect x="494" y="339" width="5" height="1" fill="#000"/><rect x="496" y="337" width="1" height="5" fill="#000"/><rect x="502" y="339" width="1" height="1" fill="#a0a0a0"/><rect x="504" y="339" width="1" height="1" fill="#a0a0a0"/><rect x="506" y="339" width="1" height="1" fill="#a0a0a0"/><rect x="508" y="339" width="1" height="1" fill="#a0a0a0"/><rect x="509" y="333" width="16" height="2" fill="#24507e"/><rect x="509" y="337" width="16" height="2" fill="#24507e"/><rect x="509" y="342" width="16" height="2" fill="#24507e"/><rect x="516" y="329" width="2" height="4" fill="#e8541c"/><rect x="516" y="334" width="2" height="3" fill="#e8541c"/><rect x="516" y="338" width="2" height="4" fill="#e8541c"/><rect x="516" y="343" width="2" height="4" fill="#e8541c"/><rect x="491.5" y="355.5" width="9" height="9" fill="#fff" stroke="#6e6e6e" stroke-width="1"/><rect x="494" y="359" width="5" height="1" fill="#000"/><rect x="496" y="357" width="1" height="5" fill="#000"/><rect x="502" y="359" width="1" height="1" fill="#a0a0a0"/><rect x="504" y="359" width="1" height="1" fill="#a0a0a0"/><rect x="506" y="359" width="1" height="1" fill="#a0a0a0"/><rect x="508" y="359" width="1" height="1" fill="#a0a0a0"/><rect x="509" y="353" width="16" height="2" fill="#24507e"/><rect x="509" y="357" width="16" height="2" fill="#24507e"/><rect x="509" y="362" width="16" height="2" fill="#24507e"/><rect x="516" y="349" width="2" height="4" fill="#e8541c"/><rect x="516" y="354" width="2" height="3" fill="#e8541c"/><rect x="516" y="358" width="2" height="4" fill="#e8541c"/><rect x="516" y="363" width="2" height="4" fill="#e8541c"/><rect x="491.5" y="375.5" width="9" height="9" fill="#fff" stroke="#6e6e6e" stroke-width="1"/><rect x="494" y="379" width="5" height="1" fill="#000"/><rect x="496" y="377" width="1" height="5" fill="#000"/><rect x="502" y="379" width="1" height="1" fill="#a0a0a0"/><rect x="504" y="379" width="1" height="1" fill="#a0a0a0"/><rect x="506" y="379" width="1" height="1" fill="#a0a0a0"/><rect x="508" y="379" width="1" height="1" fill="#a0a0a0"/><rect x="509" y="373" width="16" height="2" fill="#24507e"/><rect x="509" y="377" width="16" height="2" fill="#24507e"/><rect x="509" y="382" width="16" height="2" fill="#24507e"/><rect x="516" y="369" width="2" height="4" fill="#e8541c"/><rect x="516" y="374" width="2" height="3" fill="#e8541c"/><rect x="516" y="378" width="2" height="4" fill="#e8541c"/><rect x="516" y="383" width="2" height="4" fill="#e8541c"/><rect x="497" y="400" width="1" height="1" fill="#a0a0a0"/><rect x="499" y="400" width="1" height="1" fill="#a0a0a0"/><rect x="501" y="400" width="1" height="1" fill="#a0a0a0"/><rect x="503" y="400" width="1" height="1" fill="#a0a0a0"/><rect x="505" y="400" width="1" height="1" fill="#a0a0a0"/><rect x="507" y="400" width="1" height="1" fill="#a0a0a0"/><rect x="508.5" y="391.5" width="13" height="13" fill="#fff" stroke="#3a3238" stroke-width="1"/><circle cx="527.6" cy="394.4" r="3.3" fill="#f5b800" shape-rendering="auto"/><text x="526.3" y="406" font-family="Liberation Sans" font-size="6.8" font-weight="bold" fill="#5bb8a0" shape-rendering="auto">123</text><rect x="491.5" y="415.5" width="9" height="9" fill="#fff" stroke="#6e6e6e" stroke-width="1"/><rect x="494" y="419" width="5" height="1" fill="#000"/><rect x="502" y="419" width="1" height="1" fill="#a0a0a0"/><rect x="504" y="419" width="1" height="1" fill="#a0a0a0"/><rect x="506" y="419" width="1" height="1" fill="#a0a0a0"/><rect x="508" y="419" width="1" height="1" fill="#a0a0a0"/><rect x="509" y="413" width="16" height="2" fill="#24507e"/><rect x="509" y="417" width="16" height="2" fill="#24507e"/><rect x="509" y="422" width="16" height="2" fill="#24507e"/><rect x="516" y="409" width="2" height="4" fill="#e8541c"/><rect x="516" y="414" width="2" height="3" fill="#e8541c"/><rect x="516" y="418" width="2" height="4" fill="#e8541c"/><rect x="516" y="423" width="2" height="4" fill="#e8541c"/><rect x="518" y="440" width="1" height="1" fill="#a0a0a0"/><rect x="520" y="440" width="1" height="1" fill="#a0a0a0"/><rect x="522" y="440" width="1" height="1" fill="#a0a0a0"/><rect x="524" y="440" width="1" height="1" fill="#a0a0a0"/><rect x="526" y="440" width="1" height="1" fill="#a0a0a0"/><rect x="528" y="440" width="1" height="1" fill="#a0a0a0"/><rect x="529.5" y="431.5" width="13" height="13" fill="#fff" stroke="#3a3238" stroke-width="1"/><rect x="546" y="434" width="15" height="9" fill="#3a5a8a"/><rect x="547" y="435" width="4" height="7" fill="#20b040"/><rect x="551.5" y="435" width="4.5" height="7" fill="#fff000"/><rect x="556.5" y="435" width="3.5" height="7" fill="#f02020"/><rect x="518" y="460" width="1" height="1" fill="#a0a0a0"/><rect x="520" y="460" width="1" height="1" fill="#a0a0a0"/><rect x="522" y="460" width="1" height="1" fill="#a0a0a0"/><rect x="524" y="460" width="1" height="1" fill="#a0a0a0"/><rect x="526" y="460" width="1" height="1" fill="#a0a0a0"/><rect x="528" y="460" width="1" height="1" fill="#a0a0a0"/><rect x="529.5" y="451.5" width="13" height="13" fill="#fff" stroke="#3a3238" stroke-width="1"/><rect x="546" y="454" width="15" height="9" fill="#3a5a8a"/><rect x="547" y="455" width="4" height="7" fill="#20b040"/><rect x="551.5" y="455" width="4.5" height="7" fill="#fff000"/><rect x="556.5" y="455" width="3.5" height="7" fill="#f02020"/><rect x="518" y="480" width="1" height="1" fill="#a0a0a0"/><rect x="520" y="480" width="1" height="1" fill="#a0a0a0"/><rect x="522" y="480" width="1" height="1" fill="#a0a0a0"/><rect x="524" y="480" width="1" height="1" fill="#a0a0a0"/><rect x="526" y="480" width="1" height="1" fill="#a0a0a0"/><rect x="528" y="480" width="1" height="1" fill="#a0a0a0"/><rect x="529.5" y="471.5" width="13" height="13" fill="#fff" stroke="#3a3238" stroke-width="1"/><polyline points="531.5,477.5 534.5,481 541,474" fill="none" stroke="#333" stroke-width="1.3" shape-rendering="auto"/><rect x="546" y="474" width="15" height="9" fill="#3a5a8a"/><rect x="547" y="475" width="4" height="7" fill="#20b040"/><rect x="551.5" y="475" width="4.5" height="7" fill="#fff000"/><rect x="556.5" y="475" width="3.5" height="7" fill="#f02020"/><rect x="518" y="500" width="1" height="1" fill="#a0a0a0"/><rect x="520" y="500" width="1" height="1" fill="#a0a0a0"/><rect x="522" y="500" width="1" height="1" fill="#a0a0a0"/><rect x="524" y="500" width="1" height="1" fill="#a0a0a0"/><rect x="526" y="500" width="1" height="1" fill="#a0a0a0"/><rect x="528" y="500" width="1" height="1" fill="#a0a0a0"/><rect x="529.5" y="491.5" width="13" height="13" fill="#fff" stroke="#3a3238" stroke-width="1"/><rect x="546" y="494" width="15" height="9" fill="#3a5a8a"/><rect x="547" y="495" width="4" height="7" fill="#20b040"/><rect x="551.5" y="495" width="4.5" height="7" fill="#fff000"/><rect x="556.5" y="495" width="3.5" height="7" fill="#f02020"/><rect x="518" y="520" width="1" height="1" fill="#a0a0a0"/><rect x="520" y="520" width="1" height="1" fill="#a0a0a0"/><rect x="522" y="520" width="1" height="1" fill="#a0a0a0"/><rect x="524" y="520" width="1" height="1" fill="#a0a0a0"/><rect x="526" y="520" width="1" height="1" fill="#a0a0a0"/><rect x="528" y="520" width="1" height="1" fill="#a0a0a0"/><rect x="529.5" y="511.5" width="13" height="13" fill="#fff" stroke="#3a3238" stroke-width="1"/><rect x="546" y="514" width="15" height="9" fill="#3a5a8a"/><rect x="547" y="515" width="4" height="7" fill="#20b040"/><rect x="551.5" y="515" width="4.5" height="7" fill="#fff000"/><rect x="556.5" y="515" width="3.5" height="7" fill="#f02020"/><rect x="518" y="540" width="1" height="1" fill="#a0a0a0"/><rect x="520" y="540" width="1" height="1" fill="#a0a0a0"/><rect x="522" y="540" width="1" height="1" fill="#a0a0a0"/><rect x="524" y="540" width="1" height="1" fill="#a0a0a0"/><rect x="526" y="540" width="1" height="1" fill="#a0a0a0"/><rect x="528" y="540" width="1" height="1" fill="#a0a0a0"/><rect x="529.5" y="531.5" width="13" height="13" fill="#fff" stroke="#3a3238" stroke-width="1"/><rect x="546" y="534" width="15" height="9" fill="#3a5a8a"/><rect x="547" y="535" width="4" height="7" fill="#20b040"/><rect x="551.5" y="535" width="4.5" height="7" fill="#fff000"/><rect x="556.5" y="535" width="3.5" height="7" fill="#f02020"/><rect x="470.5" y="555.5" width="9" height="9" fill="#fff" stroke="#6e6e6e" stroke-width="1"/><rect x="473" y="559" width="5" height="1" fill="#000"/><rect x="475" y="557" width="1" height="5" fill="#000"/><rect x="481" y="559" width="1" height="1" fill="#a0a0a0"/><rect x="483" y="559" width="1" height="1" fill="#a0a0a0"/><rect x="485" y="559" width="1" height="1" fill="#a0a0a0"/><rect x="487" y="559" width="1" height="1" fill="#a0a0a0"/><g shape-rendering="auto"><path d="M490 555.5 L492.8 550.5 L499.5 550.5 L502 555.5 L499.5 559.5 L492.8 559.5 Z" fill="#fff" stroke="#e8582a" stroke-width="1.3"/><line x1="491" y1="557.3" x2="501" y2="557.3" stroke="#e8582a" stroke-width="1"/><ellipse cx="495.8" cy="554" rx="2.2" ry="1.2" fill="#5cc0c0"/><path d="M492.8 561.5 L492.8 564.5 A2.8 2.8 0 0 0 498.6 564.5 L498.6 561.5" fill="none" stroke="#3a5a8a" stroke-width="1.3"/></g></svg>
<div class="a" style="left:508.5px;top:148.3px;width:28px;height:18px;box-sizing:border-box;border:1px solid #e6e6e6"></div>
<div class="t" style="left:509.8px;top:151.2px;color:#000;font-weight:normal;letter-spacing:-0.467px;">Slab</div>
<div class="t" style="left:509.8px;top:171.2px;color:#000;font-weight:normal;letter-spacing:0.380px;">Column</div>
<div class="t" style="left:509.8px;top:191.2px;color:#000;font-weight:normal;letter-spacing:0.000px;">Beam</div>
<div class="t" style="left:509.8px;top:211.2px;color:#000;font-weight:normal;letter-spacing:0.367px;">Wall</div>
<div class="t" style="left:509.8px;top:231.2px;color:#000;font-weight:normal;letter-spacing:-0.121px;">Design Sections</div>
<div class="t" style="left:530.8px;top:251.2px;color:#000;font-weight:normal;letter-spacing:0.430px;">Deformation</div>
<div class="t" style="left:530.8px;top:271.2px;color:#000;font-weight:normal;letter-spacing:0.433px;">Actions</div>
<div class="t" style="left:530.8px;top:291.2px;color:#000;font-weight:normal;letter-spacing:-0.586px;">Stresses</div>
<div class="t" style="left:530.8px;top:311.2px;color:#000;font-weight:normal;letter-spacing:0.107px;">Balanced Loading</div>
<div class="t" style="left:530.8px;top:331.2px;color:#000;font-weight:normal;letter-spacing:0.258px;">Investigation</div>
<div class="t" style="left:530.8px;top:351.2px;color:#000;font-weight:normal;letter-spacing:0.252px;">Reinforcement (Longitudinal)</div>
<div class="t" style="left:530.8px;top:371.2px;color:#000;font-weight:normal;letter-spacing:0.210px;width:334px;overflow:hidden;">Contribution of prestressing to moment capacity of beam</div>
<div class="t" style="left:545.0px;top:391.2px;color:#000;font-weight:normal;letter-spacing:-0.057px;">Design Criteria</div>
<div class="t" style="left:530.8px;top:411.2px;color:#000;font-weight:normal;letter-spacing:-0.153px;">One-way Shear Design</div>
<div class="t" style="left:566.2px;top:431.2px;color:#c0101a;font-weight:bold;letter-spacing:-0.200px;">Shear Stress Check (NG)</div>
<div class="t" style="left:566.2px;top:451.2px;color:#000;font-weight:normal;letter-spacing:-0.062px;">Concrete Shear Strength, phiVc</div>
<div class="t" style="left:566.2px;top:471.2px;color:#000;font-weight:normal;letter-spacing:0.229px;">Vu/phiVc</div>
<div class="t" style="left:566.2px;top:491.2px;color:#000;font-weight:normal;letter-spacing:-0.108px;">Asv (required)</div>
<div class="t" style="left:566.2px;top:511.2px;color:#000;font-weight:normal;letter-spacing:0.046px;">Asv (provided)</div>
<div class="t" style="left:566.2px;top:531.2px;color:#000;font-weight:normal;letter-spacing:-0.246px;">Shear Stirrups</div>
<div class="t" style="left:509.8px;top:551.2px;color:#000;font-weight:normal;letter-spacing:0.117px;">Load Takedown</div>
</body></html>
